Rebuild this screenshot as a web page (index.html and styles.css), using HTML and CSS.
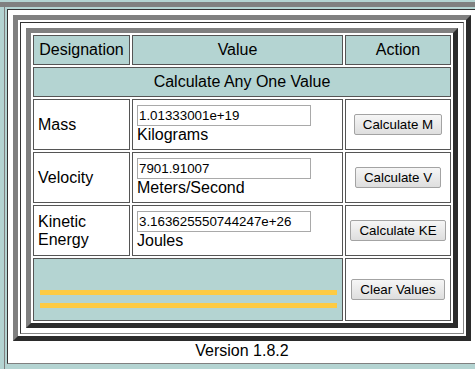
FILE: index.html
```html
<!DOCTYPE html>
<html lang="en">
<head>
    <meta charset="UTF-8">
    <meta name="viewport" content="width=device-width, initial-scale=1.0">
    <title>Kinetic Energy Calculator</title>
    <link rel="stylesheet" href="styles.css">
</head>
<body>
    <div class="top-band"></div>
    <div class="shell">
        <div class="content">
            <div class="wrap">
                <div class="frame">
                    <div class="frame-cell">
                        <table class="calc">
                            <tr class="row-head">
                                <th class="col-name">Designation</th>
                                <th class="col-value">Value</th>
                                <th class="col-action">Action</th>
                            </tr>
                            <tr class="row-head">
                                <th colspan="3">Calculate Any One Value</th>
                            </tr>
                            <tr class="row-item">
                                <td>Mass</td>
                                <td>
                                    <input type="text" class="value-input" id="mass" value="1.01333001e+19">
                                    <div class="unit">Kilograms</div>
                                </td>
                                <td class="action"><button class="btn" id="calcM">Calculate M</button></td>
                            </tr>
                            <tr class="row-item">
                                <td>Velocity</td>
                                <td>
                                    <input type="text" class="value-input" id="velocity" value="7901.91007">
                                    <div class="unit">Meters/Second</div>
                                </td>
                                <td class="action"><button class="btn" id="calcV">Calculate V</button></td>
                            </tr>
                            <tr class="row-item">
                                <td>Kinetic Energy</td>
                                <td>
                                    <input type="text" class="value-input" id="energy" value="3.163625550744247e+26">
                                    <div class="unit">Joules</div>
                                </td>
                                <td class="action"><button class="btn" id="calcKE">Calculate KE</button></td>
                            </tr>
                            <tr class="row-foot">
                                <td colspan="2" class="stripes">
                                    <div class="stripe"></div>
                                    <div class="stripe"></div>
                                </td>
                                <td class="action"><button class="btn" id="clearBtn">Clear Values</button></td>
                            </tr>
                        </table>
                    </div>
                </div>
                <div class="version">Version 1.8.2</div>
            </div>
        </div>
    </div>

    <script>
        // KE = 1/2 * m * v^2
        const massInput = document.getElementById('mass');
        const velocityInput = document.getElementById('velocity');
        const energyInput = document.getElementById('energy');

        document.getElementById('calcM').addEventListener('click', function () {
            const v = parseFloat(velocityInput.value);
            const ke = parseFloat(energyInput.value);
            massInput.value = (2 * ke) / (v * v);
        });

        document.getElementById('calcV').addEventListener('click', function () {
            const m = parseFloat(massInput.value);
            const ke = parseFloat(energyInput.value);
            velocityInput.value = Math.sqrt((2 * ke) / m);
        });

        document.getElementById('calcKE').addEventListener('click', function () {
            const m = parseFloat(massInput.value);
            const v = parseFloat(velocityInput.value);
            energyInput.value = 0.5 * m * v * v;
        });

        document.getElementById('clearBtn').addEventListener('click', function () {
            massInput.value = '';
            velocityInput.value = '';
            energyInput.value = '';
        });
    </script>
</body>
</html>
```

FILE: styles.css
```css
body {
    margin: 0;
    background-color: #b4d4d2;
    font-family: 'Liberation Sans', Arial, sans-serif;
    color: #000;
    overflow: hidden;
}

.top-band {
    height: 5px;
    margin-top: 2px;
    background-color: #808080;
}

.shell {
    box-sizing: border-box;
    margin-left: 4px;
    border-left: 1px solid #808080;
    padding: 2px 0 0 2px;
    height: calc(100vh - 7px);
}

.content {
    background-color: #fff;
    border-top: 1px solid #333;
    border-left: 1px solid #333;
    border-bottom: 1px solid #808080;
    padding: 5px 0 3px 5px;
}

.wrap {
    width: 458px;
}

.frame {
    border: 5px solid;
    border-color: #808080 #2b2b2b #2b2b2b #808080;
    padding: 2px;
}

.frame-cell {
    border: 1px solid;
    border-color: #333 #888 #888 #333;
    padding: 5px;
}

.calc {
    border-collapse: separate;
    border-spacing: 2px;
    border: 5px solid;
    border-color: #808080 #2b2b2b #2b2b2b #808080;
    table-layout: fixed;
    width: 432px;
}

.calc th,
.calc td {
    box-sizing: border-box;
    border: 1px solid #555;
    padding: 4px;
    font-size: 16px;
    font-weight: normal;
    text-align: left;
    vertical-align: middle;
}

.calc th {
    background-color: #b4d4d2;
    text-align: center;
}

.col-name {
    width: 97px;
}

.col-value {
    width: 211px;
}

.col-action {
    width: 106px;
}

.row-head {
    height: 30px;
}

.row-item {
    height: 51px;
}

.row-foot {
    height: 63px;
}

.value-input {
    display: block;
    box-sizing: border-box;
    width: 174px;
    height: 21px;
    margin: 0;
    padding: 1px;
    border: 1px solid #a9a9a9;
    font-family: 'Liberation Sans', Arial, sans-serif;
    font-size: 13.33px;
    color: #000;
}

.unit {
    line-height: 18px;
}

.calc td.action {
    text-align: center;
}

.btn {
    height: 21px;
    padding: 1px 8px;
    border: 1px solid #a3a3a3;
    border-radius: 2px;
    background: linear-gradient(#f6f6f6, #dedede);
    font-family: 'Liberation Sans', Arial, sans-serif;
    font-size: 13.33px;
    color: #000;
    cursor: pointer;
}

.calc td.stripes {
    background-color: #b4d4d2;
    padding: 31px 5px 0 6px;
    vertical-align: top;
}

.stripe {
    height: 5px;
    background-color: #fdcb44;
    margin-bottom: 8px;
}

.version {
    margin-top: 1px;
    line-height: 18px;
    text-align: center;
}
```
